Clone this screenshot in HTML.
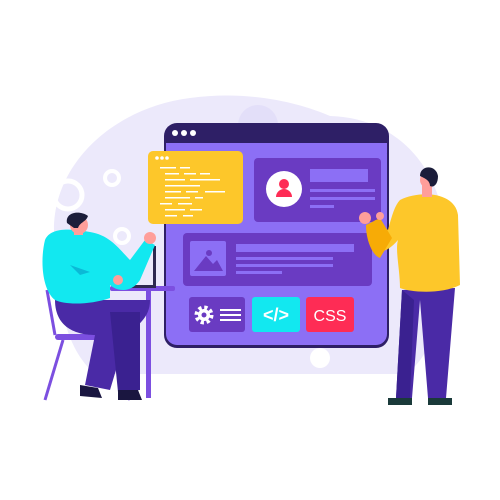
<!DOCTYPE html>
<html><head><style>
html,body{margin:0;padding:0;background:#fff;width:500px;height:500px;overflow:hidden}
</style></head><body>
<svg width="500" height="500" viewBox="0 0 500 500" xmlns="http://www.w3.org/2000/svg" font-family="Liberation Sans, sans-serif">
<path d="M55,245 C45,170 110,108 190,98 C250,90 300,103 330,116 C400,118 440,170 445,230 C450,300 432,360 405,374 L95,374 C62,345 58,295 55,245 Z" fill="#ece9fb"/>
<circle cx="258" cy="125" r="20" fill="#e3dff9"/>
<circle cx="112" cy="178" r="7" fill="none" stroke="#fff" stroke-width="4"/>
<circle cx="122" cy="236" r="7" fill="none" stroke="#fff" stroke-width="4"/>
<circle cx="320" cy="358" r="10" fill="#fff"/>
<circle cx="68" cy="195" r="14" fill="none" stroke="#fff" stroke-width="5"/>
<rect x="164" y="123" width="225" height="225" rx="13" fill="#2e1f66"/>
<rect x="166" y="143" width="221" height="202" rx="11" fill="#8c6ff5"/>
<rect x="166" y="143" width="221" height="10" fill="#8c6ff5"/>
<circle cx="175" cy="133" r="3" fill="#fff"/><circle cx="184" cy="133" r="3" fill="#fff"/><circle cx="193" cy="133" r="3" fill="#fff"/>
<rect x="254" y="158" width="127" height="64" rx="4" fill="#6a3bc2"/>
<circle cx="284" cy="189" r="18" fill="#fff"/>
<circle cx="284" cy="184" r="5" fill="#fe2c55"/>
<path d="M276,197 a8,8 0 0 1 16,0 z" fill="#fe2c55"/>
<rect x="310" y="169" width="58" height="13" fill="#8c6ff5"/>
<rect x="310" y="189" width="65" height="3" fill="#8c6ff5"/>
<rect x="310" y="197" width="65" height="3" fill="#8c6ff5"/>
<rect x="310" y="205" width="24" height="3" fill="#8c6ff5"/>
<rect x="183" y="233" width="189" height="53" rx="4" fill="#6a3bc2"/>
<rect x="190" y="241" width="36" height="35" rx="2" fill="#8c6ff5"/>
<path d="M194,271 L206,256 L213,264 L217,260 L223,271 Z" fill="#6a3bc2"/>
<circle cx="209" cy="253" r="3" fill="#6a3bc2"/>
<rect x="236" y="244" width="118" height="8" fill="#8c6ff5"/>
<rect x="236" y="257" width="97" height="3" fill="#8c6ff5"/>
<rect x="236" y="264" width="97" height="3" fill="#8c6ff5"/>
<rect x="236" y="271" width="46" height="3" fill="#8c6ff5"/>
<rect x="189" y="297" width="56" height="35" rx="3" fill="#6a3bc2"/>
<circle cx="204" cy="315" r="7" fill="none" stroke="#fff" stroke-width="5" stroke-dasharray="3 2.5"/>
<circle cx="204" cy="315" r="6" fill="#fff"/>
<circle cx="204" cy="315" r="2.5" fill="#6a3bc2"/>
<rect x="220" y="309" width="21" height="2" fill="#fff"/>
<rect x="220" y="314" width="21" height="2" fill="#fff"/>
<rect x="220" y="319" width="21" height="2" fill="#fff"/>
<rect x="252" y="297" width="48" height="35" rx="3" fill="#12e8f0"/>
<text x="276" y="321" font-size="18" font-weight="bold" fill="#fff" text-anchor="middle">&lt;/&gt;</text>
<rect x="306" y="297" width="48" height="35" rx="3" fill="#fe2c55"/>
<text x="330" y="321" font-size="16" fill="#fff" text-anchor="middle">CSS</text>
<rect x="148" y="151" width="95" height="73" rx="5" fill="#fdc72a"/>
<circle cx="157" cy="158" r="1.8" fill="#fff"/><circle cx="162" cy="158" r="1.8" fill="#fff"/><circle cx="167" cy="158" r="1.8" fill="#fff"/>
<g fill="#fff">
<rect x="160" y="167" width="16" height="1.5"/><rect x="180" y="167" width="10" height="1.5"/>
<rect x="165" y="173" width="14" height="1.5"/><rect x="184" y="173" width="12" height="1.5"/><rect x="200" y="173" width="10" height="1.5"/>
<rect x="165" y="179" width="20" height="1.5"/><rect x="190" y="179" width="30" height="1.5"/>
<rect x="165" y="185" width="35" height="1.5"/>
<rect x="165" y="191" width="16" height="1.5"/><rect x="186" y="191" width="12" height="1.5"/><rect x="205" y="191" width="20" height="1.5"/>
<rect x="165" y="197" width="25" height="1.5"/><rect x="195" y="197" width="8" height="1.5"/>
<rect x="160" y="203" width="12" height="1.5"/><rect x="178" y="203" width="14" height="1.5"/>
<rect x="165" y="209" width="20" height="1.5"/><rect x="190" y="209" width="12" height="1.5"/>
<rect x="165" y="215" width="12" height="1.5"/><rect x="183" y="215" width="10" height="1.5"/>
</g>
<g stroke="#7c4fe0" stroke-width="3" fill="none">
<path d="M47,290 L55,335"/>
<path d="M63,340 L45,400"/>
<path d="M105,340 L130,400"/>
</g>
<rect x="55" y="334" width="68" height="6" rx="3" fill="#7c4fe0"/>
<rect x="110" y="286" width="65" height="5" rx="2" fill="#7c4fe0"/>
<rect x="146" y="290" width="5" height="108" fill="#7c4fe0"/>
<path d="M153,246 L156,246 L156,288 L118,288 L118,285 L153,285 Z" fill="#2e2850"/>
<path d="M55,300 C55,330 80,335 95,335 L85,385 L110,390 L125,340 C135,325 150,320 150,300 Z" fill="#4a2aa6"/>
<path d="M110,312 L140,312 L140,390 L118,392 Z" fill="#3a2190"/>
<path d="M80,385 L98,388 L102,398 L80,396 Z" fill="#1a1640"/>
<path d="M118,390 L138,390 L142,400 L118,400 Z" fill="#1a1640"/>
<path d="M45,240 C50,228 68,228 90,232 C110,235 120,250 130,260 L145,240 L155,245 L140,280 C130,295 115,290 110,285 L110,298 C90,305 65,305 55,300 C42,290 40,260 45,240 Z" fill="#12e8f0"/>
<path d="M70,265 L90,272 L80,275 Z" fill="#0bb9d6"/>
<circle cx="150" cy="238" r="6" fill="#ff9e9a"/>
<circle cx="118" cy="280" r="5" fill="#ff9e9a"/>
<rect x="74" y="225" width="9" height="10" fill="#ff9e9a"/>
<circle cx="79" cy="225" r="9" fill="#ff9e9a"/>
<path d="M67,223 C65,212 80,210 88,216 C86,222 80,222 78,228 L74,228 Z" fill="#1b1d3a"/>
<path d="M402,290 L396,398 L412,398 L420,300 L428,398 L446,398 L455,288 Z" fill="#4a2aa6"/>
<path d="M402,290 L396,398 L410,398 L414,300 Z" fill="#3a2190"/>
<path d="M388,398 L412,398 L412,405 L388,405 Z" fill="#1a3a3a"/>
<path d="M428,398 L452,398 L452,405 L428,405 Z" fill="#1a3a3a"/>
<path d="M400,200 C420,190 455,192 458,215 L460,285 C440,295 410,292 400,288 C400,270 395,250 398,240 C385,255 375,255 368,240 L375,220 L388,230 C392,215 395,205 400,200 Z" fill="#fdc72a"/>
<path d="M366,225 L380,218 L392,238 L380,258 C372,255 366,240 366,225 Z" fill="#f7ab06"/>
<circle cx="365" cy="218" r="6" fill="#ff9e9a"/>
<circle cx="380" cy="216" r="4" fill="#ff9e9a"/>
<rect x="422" y="185" width="10" height="12" fill="#ff9e9a"/>
<circle cx="428" cy="180" r="8" fill="#ff9e9a"/>
<path d="M420,176 C420,165 436,164 438,176 C438,184 434,188 430,186 C430,180 424,178 420,176 Z" fill="#1b1d3a"/>
</svg>
</body></html>
